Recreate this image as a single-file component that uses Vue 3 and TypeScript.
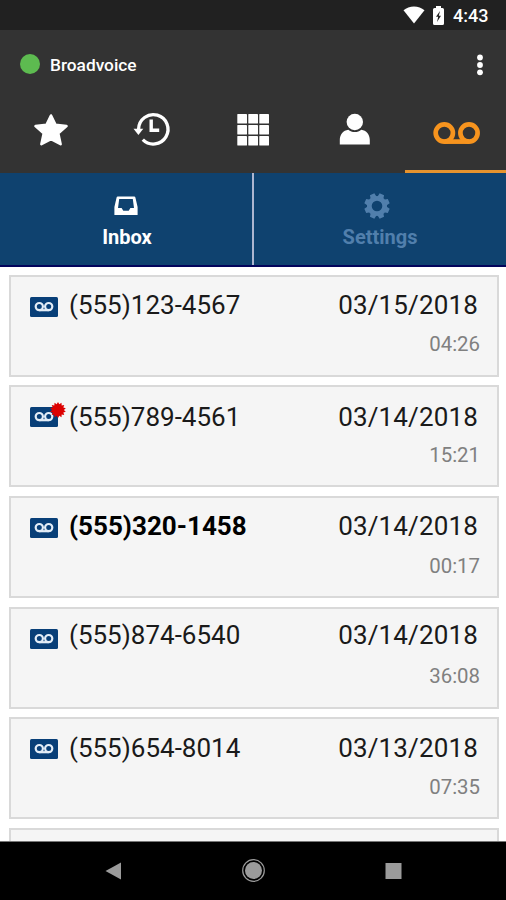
<script setup lang="ts">
interface Voicemail {
  phone: string
  date: string
  duration: string
  unread?: boolean
  urgent?: boolean
  nudge: number
}

const messages: Voicemail[] = [
  { phone: '(555)123-4567', date: '03/15/2018', duration: '04:26', nudge: 0 },
  { phone: '(555)789-4561', date: '03/14/2018', duration: '15:21', urgent: true, nudge: 2 },
  { phone: '(555)320-1458', date: '03/14/2018', duration: '00:17', unread: true, nudge: 0 },
  { phone: '(555)874-6540', date: '03/14/2018', duration: '36:08', nudge: -1.5 },
  { phone: '(555)654-8014', date: '03/13/2018', duration: '07:35', nudge: 0.5 },
]

const keypad = [0, 1, 2, 3, 4, 5, 6, 7, 8]

// Outline of a star-shaped badge with fourteen short spikes.
const burst = Array.from({ length: 28 }, (_, i) => {
  const r = i % 2 === 0 ? 8 : 5.9
  const a = (i * Math.PI) / 14
  return `${(8 + r * Math.sin(a)).toFixed(2)},${(8 - r * Math.cos(a)).toFixed(2)}`
}).join(' ')

// The eight teeth of the settings gear.
const teeth = [22.5, 67.5, 112.5, 157.5, 202.5, 247.5, 292.5, 337.5]
</script>

<template>
  <div class="screen">
    <div class="status">
      <svg class="wifi" width="22" height="18" viewBox="0 0 22 18"><path d="M0.5 4.2C3.4 1.7 7 .4 11 .4s7.600 1.300 10.500 3.800L11 17.600z" fill="#fff" /></svg>
      <svg class="battery" width="11" height="19" viewBox="0 0 11 19">
        <path d="M3 2V0h5v2h1.500Q11 2 11 3.500v14Q11 19 9.500 19h-8Q0 19 0 17.500v-14Q0 2 1.500 2z" fill="#fff" />
        <path d="M7 5L3 10.800h2.200L4 16l4-6.300H5.800z" fill="#212121" />
      </svg>
      <span class="clock">4:43</span>
    </div>

    <header class="header">
      <div class="account">
        <i class="presence"></i>
        <span class="name">Broadvoice</span>
        <svg class="more" width="8" height="22" viewBox="0 0 8 22" fill="#fff"><circle cx="4" cy="3.500" r="2.900" /><circle cx="4" cy="11" r="2.900" /><circle cx="4" cy="18.300" r="2.900" /></svg>
      </div>
      <nav class="nav">
        <a class="nav-item">
          <svg width="36" height="36" viewBox="0 0 36 36"><path d="M18 3.500l4.500 9.300 11 1.200-8.200 7.400 2.300 10.800L18 27 8.400 32.200l2.300-10.800L2.500 14l11-1.200z" fill="#fff" stroke="#fff" stroke-width="2.600" stroke-linejoin="round" /></svg>
        </a>
        <a class="nav-item">
          <svg width="36" height="36" viewBox="0 0 36 36" fill="none" stroke="#fff">
            <path d="M4.600 17A14.700 14.700 0 1 1 8.800 27.600" stroke-width="3.300" />
            <path d="M-.5 16.800h9.800L4.400 23z" fill="#fff" stroke="none" />
            <path d="M17.200 7.500v10.800H25.200" stroke-width="3.400" />
          </svg>
        </a>
        <a class="nav-item">
          <svg width="36" height="36" viewBox="0 0 36 36" fill="#fff">
            <rect v-for="k in keypad" :key="k" :x="2.300 + (k % 3) * 11" :y="1.900 + Math.floor(k / 3) * 11" width="9.700" height="9.700" rx=".7" />
          </svg>
        </a>
        <a class="nav-item">
          <svg width="36" height="36" viewBox="0 0 36 36" fill="#fff">
            <circle cx="18.800" cy="10" r="8.200" />
            <path d="M3.800 32.500v-4.500C3.800 22.500 7.300 18.300 12.300 17.700c1.800 1.500 4 2.300 6.500 2.300s4.700-.8 6.500-2.300C30.300 18.300 33.800 22.500 33.800 28v4.500z" />
          </svg>
        </a>
        <a class="nav-item active">
          <svg width="48" height="24" viewBox="0 0 48 24" fill="none" stroke="#f7941e" stroke-width="4.700"><circle cx="13.300" cy="12" r="8.600" /><circle cx="38" cy="12" r="8.600" /><path d="M13.300 20.600H38" /></svg>
        </a>
      </nav>
    </header>

    <div class="tabs">
      <div class="tab">
        <svg width="26" height="26" viewBox="0 0 26 26">
          <path fill-rule="evenodd" d="M4.800 3.500h16.400q1 0 1.200 1l2.200 9.500v8H1.400v-8L3.600 4.500q.2-1 1.200-1zM6.200 6L5 15h3.600l1.700 2.700h5.400L17.400 15H21L19.800 6z" fill="#fff" />
        </svg>
        <span>Inbox</span>
      </div>
      <div class="tab dim">
        <svg width="26" height="26" viewBox="0 0 26 26">
          <circle cx="13" cy="13" r="7.700" fill="none" stroke="#517fac" stroke-width="4.800" />
          <path v-for="t in teeth" :key="t" d="M9.800 4.500l.8-4.200h4.800l.8 4.200z" fill="#517fac" :transform="`rotate(${t} 13 13)`" />
        </svg>
        <span>Settings</span>
      </div>
    </div>

    <main class="list">
      <article v-for="m in messages" :key="m.phone" class="card">
        <div class="tape">
          <svg width="28" height="20" viewBox="0 0 28 20">
            <rect width="28" height="20" rx="1.500" fill="#083f78" />
            <g fill="none" stroke="#e3edf7" stroke-width="2.200"><circle cx="9.300" cy="9.600" r="3.600" /><circle cx="18.700" cy="9.600" r="3.600" /><path d="M9.300 13.200h9.400" /></g>
          </svg>
          <svg v-if="m.urgent" class="badge" width="16" height="16" viewBox="0 0 16 16"><polygon :points="burst" fill="#dc0000" /></svg>
        </div>
        <div class="line" :style="{ '--nudge': `${m.nudge}px` }">
          <span class="phone" :class="{ unread: m.unread }">{{ m.phone }}</span>
          <time class="date">{{ m.date }}</time>
        </div>
        <span class="duration">{{ m.duration }}</span>
      </article>
      <article class="card"></article>
    </main>

    <footer class="system">
      <svg width="24" height="24" viewBox="0 0 24 24"><path d="M4.500 12L20 3.500v17z" fill="#9b9b9b" /></svg>
      <svg width="24" height="24" viewBox="0 0 24 24"><circle cx="12.500" cy="11.500" r="8.500" fill="#9b9b9b" /><circle cx="12.500" cy="11.500" r="10.800" fill="none" stroke="#9b9b9b" stroke-width="1.200" /></svg>
      <svg width="24" height="24" viewBox="0 0 24 24"><rect x="4.500" y="4" width="16" height="16" fill="#9b9b9b" /></svg>
    </footer>
  </div>
</template>

<style>
body { margin: 0; }
</style>

<style scoped>
.screen {
  width: 506px;
  height: 900px;
  display: flex;
  flex-direction: column;
  overflow: hidden;
  background: #fff;
  font-family: Roboto, "Liberation Sans", sans-serif;
}
.screen svg { display: block; flex: none; overflow: visible; }
.status {
  height: 30px;
  flex: none;
  display: flex;
  justify-content: flex-end;
  align-items: center;
  box-sizing: border-box;
  padding: 0 18px 0 0;
  background: #212121;
  color: #fff;
}
.battery { margin: 0 9px 0 8px; }
.clock { width: 35px; padding-top: 1px; font-size: 18px; font-weight: 500; line-height: 30px; white-space: nowrap; }
.header { height: 143px; flex: none; background: #333; }
.account { height: 70px; display: flex; align-items: center; padding: 0 22px 0 20px; }
.presence { width: 20px; height: 20px; margin-top: -2px; border-radius: 50%; background: #5dbb50; }
.name { flex: 1; margin-left: 10px; color: #fff; font-size: 17.300px; font-weight: 500; line-height: 24px; }
.nav { height: 73px; display: flex; }
.nav-item {
  flex: 1;
  display: flex;
  align-items: center;
  justify-content: center;
  box-sizing: border-box;
  padding-bottom: 14px;
}
.nav-item.active { border-bottom: 3px solid #e5932e; padding-bottom: 5px; }
.tabs {
  height: 94px;
  flex: none;
  display: grid;
  grid-template-columns: 254px 252px;
  box-sizing: border-box;
  border-bottom: 2px solid #03045c;
  background: #0f426f;
}
.tab {
  display: flex;
  flex-direction: column;
  align-items: center;
  padding-top: 20px;
  color: #fff;
  font-size: 20px;
  font-weight: 700;
  line-height: 24px;
}
.tab:first-child { border-right: 2px solid #adb6d0; }
.tab:first-child span { margin-left: 2px; }
.tab span { margin-top: 6px; }
.tab.dim { color: #517fac; }
.tab.dim svg { margin-right: 6px; }
.list {
  flex: 1;
  min-height: 0;
  overflow: hidden;
  display: flex;
  flex-direction: column;
  gap: 8.700px;
  padding: 7.500px 7px 0 9px;
}
.card {
  height: 102px;
  flex: none;
  display: grid;
  grid-template-columns: 39px 1fr;
  grid-template-rows: 56px 24px;
  box-sizing: border-box;
  border: 2px solid #d9d9d9;
  padding: 0 17px 0 19px;
  background: #f5f5f5;
}
.tape { position: relative; padding-top: 20px; }
.badge { position: absolute; top: 15px; left: 20px; }
.line {
  display: flex;
  justify-content: space-between;
  padding-top: calc(12px + var(--nudge));
  color: #1a1a1a;
  font-size: 26px;
  line-height: 32px;
}
.date { margin-right: 2px; letter-spacing: 0.150px; }
.unread { color: #000; font-weight: 700; }
.duration {
  grid-column: 2;
  justify-self: end;
  margin-top: -0.300px;
  color: #808080;
  font-size: 20.400px;
  line-height: 24px;
}
.system {
  height: 59px;
  flex: none;
  box-sizing: border-box;
  border-top: 1px solid #777;
  display: flex;
  align-items: center;
  justify-content: center;
  gap: 116px;
  background: #000;
}
</style>
